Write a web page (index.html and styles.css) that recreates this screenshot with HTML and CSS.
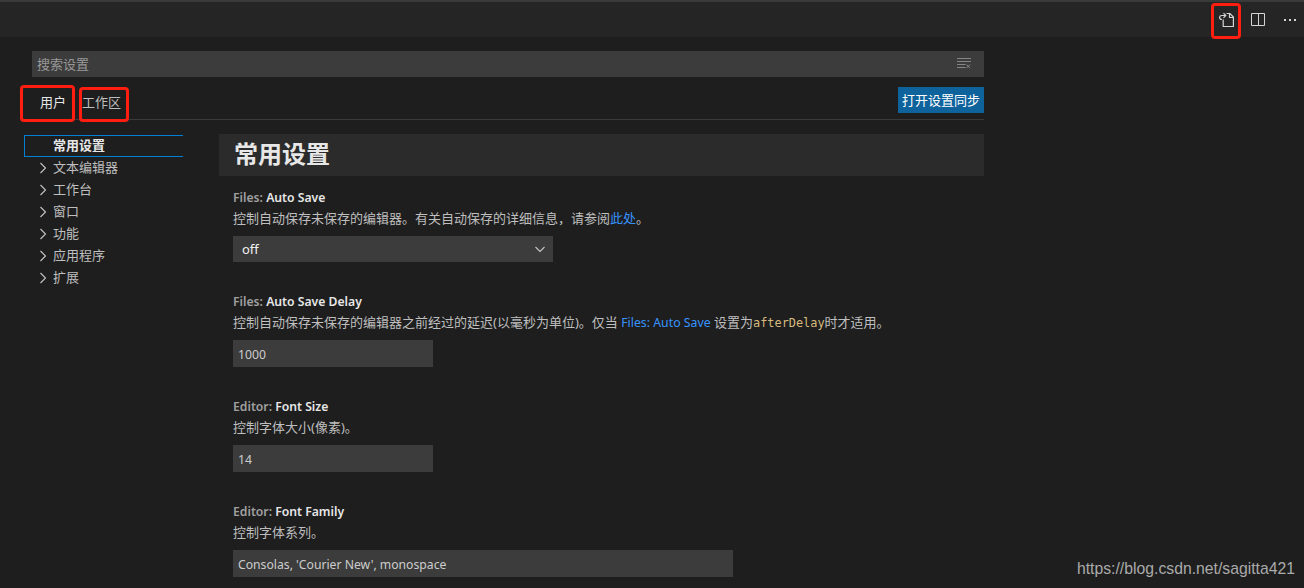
FILE: index.html
```html
<!DOCTYPE html>
<html lang="zh-CN">
<head>
  <meta charset="utf-8">
  <title>设置</title>
  <link rel="stylesheet" href="styles.css">
</head>
<body>
  <div class="title-bar">
    <div class="action marked">
      <svg width="16" height="16" viewBox="0 0 16 16" fill="none" stroke="#d4d4d4" stroke-width="1.2">
        <path d="M8.5 1.5H12L15.4 5V14.5H5.2V7.5M11.5 1.5V5.5H15.4"/>
        <path d="M4 7.5C.8 7.2.8 3.5 4 3.5H7.5M5.5 1.2L7.8 3.5L5.5 5.8"/>
      </svg>
    </div>
    <div class="action">
      <svg width="16" height="16" viewBox="0 0 16 16" fill="none" stroke="#d4d4d4">
        <path d="M1.5 1.5H14.5V13.5H1.5ZM8.5 1.5V13.5"/>
      </svg>
    </div>
    <div class="action">
      <svg width="16" height="16" viewBox="0 0 16 16" fill="#d4d4d4">
        <path d="M2 7H4V9H2ZM7 7H9V9H7ZM12 7H14V9H12Z"/>
      </svg>
    </div>
  </div>

  <div class="settings-editor">
    <div class="search">
      <span>搜索设置</span>
      <svg width="16" height="16" viewBox="0 0 16 16" fill="none" stroke="#858585">
        <path d="M1 3.5H15M1 6.5H15M1 9.5H9.5M1 12.5H9.5M10.5 9.5L14 13M14 9.5L10.5 13"/>
      </svg>
    </div>

    <div class="header">
      <div class="tabs">
        <div class="tab active marked">用户</div>
        <div class="tab workspace marked">工作区</div>
      </div>
      <button class="sync">打开设置同步</button>
    </div>

    <div class="body">
      <ul class="toc">
        <li class="selected">常用设置</li>
        <li><svg class="chevron" viewBox="0 0 16 16"><path d="M5.5 3L10.5 8L5.5 13"/></svg>文本编辑器</li>
        <li><svg class="chevron" viewBox="0 0 16 16"><path d="M5.5 3L10.5 8L5.5 13"/></svg>工作台</li>
        <li><svg class="chevron" viewBox="0 0 16 16"><path d="M5.5 3L10.5 8L5.5 13"/></svg>窗口</li>
        <li><svg class="chevron" viewBox="0 0 16 16"><path d="M5.5 3L10.5 8L5.5 13"/></svg>功能</li>
        <li><svg class="chevron" viewBox="0 0 16 16"><path d="M5.5 3L10.5 8L5.5 13"/></svg>应用程序</li>
        <li><svg class="chevron" viewBox="0 0 16 16"><path d="M5.5 3L10.5 8L5.5 13"/></svg>扩展</li>
      </ul>

      <div class="settings">
        <h2>常用设置</h2>

        <div class="setting">
          <div class="name"><span>Files:</span> Auto Save</div>
          <div class="description">控制自动保存未保存的编辑器。有关自动保存的详细信息，请参阅<a>此处</a>。</div>
          <div class="select">
            <span>off</span>
            <svg class="chevron" viewBox="0 0 16 16"><path d="M3.5 6L8 10.5L12.5 6"/></svg>
          </div>
        </div>

        <div class="setting">
          <div class="name"><span>Files:</span> Auto Save Delay</div>
          <div class="description">控制自动保存未保存的编辑器之前经过的延迟(以毫秒为单位)。仅当 <a class="latin">Files: Auto Save</a> 设置为<code>afterDelay</code>时才适用。</div>
          <div class="input">1000</div>
        </div>

        <div class="setting">
          <div class="name"><span>Editor:</span> Font Size</div>
          <div class="description">控制字体大小(像素)。</div>
          <div class="input">14</div>
        </div>

        <div class="setting">
          <div class="name"><span>Editor:</span> Font Family</div>
          <div class="description">控制字体系列。</div>
          <div class="input wide">Consolas, 'Courier New', monospace</div>
        </div>
      </div>
    </div>
  </div>

  <div class="watermark">https://blog.csdn.net/sagitta421</div>
</body>
</html>
```
FILE: styles.css
```css
* {
  box-sizing: border-box;
}
body {
  margin: 0;
  height: 588px;
  overflow: hidden;
  background: #1e1e1e;
  color: #bfbfbf;
  font-family: "Noto Sans", "Noto Sans CJK SC", sans-serif;
  font-size: 13px;
}
.title-bar {
  display: flex;
  justify-content: flex-end;
  gap: 16px;
  height: 37px;
  padding: 10px 6px 0 0;
  border-top: 2px solid #3a3a3a;
  background: #252526;
}
.action {
  width: 16px;
  height: 16px;
}
.action svg {
  display: block;
}

/* red highlight boxes */
.marked {
  position: relative;
}
.marked::after {
  content: "";
  position: absolute;
  border: 3px solid #ff1e10;
  border-radius: 4px;
}
.action.marked::after {
  inset: -9px -7px -11px -7px;
}
.tab.active::after {
  inset: -2px -9px -1px -20px;
}
.tab.workspace::after {
  inset: 0 -8px -1px -3px;
}

.settings-editor {
  width: 960px;
  margin-left: 24px;
  padding-top: 14px;
}
.search {
  display: flex;
  justify-content: space-between;
  height: 26px;
  margin-left: 8px;
  padding: 4px 12px 0 5px;
  background: #3c3c3c;
  color: #989898;
  line-height: 18px;
}
.header {
  display: flex;
  justify-content: space-between;
  height: 43px;
  padding: 10px 0 0 16px;
  border-bottom: 1px solid #3a3a3a;
}
.tabs {
  display: flex;
  gap: 16px;
}
.tab {
  height: 34px;
  line-height: 30px;
}
.tab.active {
  color: #e7e7e7;
}
.sync {
  width: 86px;
  height: 26px;
  padding: 0 0 2px;
  border: none;
  background: #0e639c;
  color: #fff;
  font: inherit;
}

.body {
  display: flex;
  gap: 36px;
  padding-top: 14px;
}
.toc {
  width: 159px;
  margin: 1px 0 0;
  padding: 0;
  list-style: none;
}
.toc li {
  display: flex;
  gap: 2px;
  height: 22px;
  padding-left: 11px;
  line-height: 20px;
}
.toc .chevron {
  margin-top: 3px;
}
.toc .selected {
  padding-left: 28px;
  border: 1px solid #007fd4;
  border-right: none;
  color: #e7e7e7;
  font-weight: bold;
  line-height: 18px;
}
.chevron {
  width: 16px;
  height: 16px;
  fill: none;
  stroke: #c5c5c5;
  stroke-width: 1.1;
}

.settings {
  width: 765px;
}
h2 {
  height: 42px;
  margin: 0 0 11px;
  padding-left: 15px;
  background: #2b2b2b;
  color: #e7e7e7;
  font-size: 24px;
  line-height: 40px;
}
.setting {
  margin-bottom: 29px;
  padding-left: 14px;
}
.name {
  height: 21px;
  color: #e7e7e7;
  font-size: 12.2px;
  font-weight: 600;
  line-height: 22px;
}
.name span {
  color: #a0a0a0;
}
.description {
  height: 20px;
  margin-bottom: 8px;
  line-height: 20px;
  white-space: nowrap;
}
.description a {
  color: #3794ff;
}
.description .latin {
  font-size: 12.3px;
}
code {
  color: #d7ba7d;
  font-family: "DejaVu Sans Mono", monospace;
  font-size: 11.9px;
}
.select,
.input {
  display: flex;
  align-items: center;
  background: #3c3c3c;
}
.select {
  justify-content: space-between;
  width: 320px;
  height: 26px;
  padding: 0 5px 0 9px;
  color: #f0f0f0;
}
.input {
  width: 200px;
  height: 27px;
  padding: 2px 0 0 5px;
  color: #ccc;
  font-size: 12.2px;
}
.input.wide {
  width: 500px;
}

.watermark {
  position: absolute;
  right: 9px;
  bottom: 10px;
  color: #aaa;
  font-family: "Liberation Sans", sans-serif;
  font-size: 15.75px;
}
```
